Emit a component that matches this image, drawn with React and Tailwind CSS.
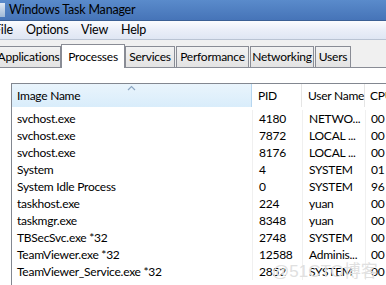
import React from "react";

const rows = [
  ["svchost.exe", "4180", "NETWO...", "00"],
  ["svchost.exe", "7872", "LOCAL ...", "00"],
  ["svchost.exe", "8176", "LOCAL ...", "00"],
  ["System", "4", "SYSTEM", "01"],
  ["System Idle Process", "0", "SYSTEM", "96"],
  ["taskhost.exe", "224", "yuan", "00"],
  ["taskmgr.exe", "8348", "yuan", "00"],
  ["TBSecSvc.exe *32", "2748", "SYSTEM", "00"],
  ["TeamViewer.exe *32", "12588", "Adminis...", "00"],
  ["TeamViewer_Service.exe *32", "2852", "SYSTEM", "00"],
];

const font = { fontFamily: 'Lato, "Noto Sans", sans-serif' };

export default function App() {
  return (
    <div className="relative w-[386px] h-[285px] overflow-hidden bg-white" style={font}>
      {/* Title bar */}
      <div className="flex h-[21px] items-center bg-gradient-to-b from-[#5a8bcb] to-[#4674b8] border-b border-[#3b5f94]">
        <div className="w-[5px] h-[14px] bg-gradient-to-b from-[#dfe9f5] to-[#9fb8d6] mr-[4px]" />
        <span className="text-[12.5px] tracking-[-0.2px] leading-none text-black whitespace-nowrap">Windows Task Manager</span>
      </div>
      {/* Menu bar */}
      <div className="flex h-[19px] items-center bg-gradient-to-b from-[#fbfcfe] via-[#eaeef8] to-[#dfe6f3] text-[12.5px] tracking-[-0.2px] text-black border-b border-[#b9c3d3] whitespace-nowrap">
        <span className="ml-[-6px] w-[32px]">File</span>
        <span className="w-[55px]">Options</span>
        <span className="w-[40px]">View</span>
        <span>Help</span>
      </div>
      {/* Tabs */}
      <div className="bg-[#f0f0f0] pt-[5px] h-[28px] flex items-end border-b border-[#898c95]">
        <div className="flex items-end h-full ml-[-4px] text-[12px] tracking-[-0.25px]">
          <Tab label="Applications" w={65} />
          <div className="h-[24px] w-[64px] -mb-px bg-white border border-b-0 border-[#898c95] flex items-start justify-center pt-[3px] z-10 relative whitespace-nowrap">Processes</div>
          <Tab label="Services" w={50} />
          <div className="w-[1px]" />
          <Tab label="Performance" w={73} />
          <div className="w-[1px]" />
          <Tab label="Networking" w={64} />
          <div className="w-[1px]" />
          <Tab label="Users" w={36} />
        </div>
      </div>
      {/* Content */}
      <div className="bg-white pt-[15px] pl-[11px]">
        <div className="border-l border-t border-[#828790] w-[400px] h-[220px]">
          {/* header */}
          <div className="flex h-[23px] text-[12px] tracking-[-0.25px] text-black whitespace-nowrap">
            <div className="relative w-[240px] bg-gradient-to-b from-[#e9f4fc] to-[#d9edfb] border-r border-[#b6d6f0] flex items-center pl-[5px]">
              Image Name
              <svg className="absolute left-[115px] top-[1px]" width="9" height="6" viewBox="0 0 9 6">
                <path d="M1 5 L4.5 1.5 L8 5" fill="none" stroke="#8ca6c2" strokeWidth="1.2" />
              </svg>
            </div>
            <div className="w-[50px] border-r border-[#e5e5e5] flex items-center pl-[6px]">PID</div>
            <div className="w-[63px] border-r border-[#e5e5e5] flex items-center pl-[6px]">User Name</div>
            <div className="flex items-center pl-[5px]">CPU</div>
          </div>
          <div className="pt-[3px]">
            {rows.map((r, i) => (
              <div key={i} className="flex h-[17px] text-[12px] tracking-[-0.25px] text-black leading-[17px] whitespace-nowrap">
                <div className="w-[240px] pl-[5px]">{r[0]}</div>
                <div className="w-[50px] border-l border-[#f0f0f0] pl-[6px]">{r[1]}</div>
                <div className="w-[63px] border-l border-[#f0f0f0] pl-[6px] overflow-hidden">{r[2]}</div>
                <div className="border-l border-[#f0f0f0] pl-[5px]">{r[3]}</div>
              </div>
            ))}
          </div>
        </div>
      </div>
      <div className="absolute left-[272px] top-[259px] text-[17px] text-[#e0e0e0] whitespace-nowrap pointer-events-none" style={{ fontFamily: '"Liberation Sans", "Noto Sans CJK SC", sans-serif' }}>
        @51CTO博客
      </div>
    </div>
  );
}

function Tab({ label, w }) {
  return (
    <div
      className="h-[21px] bg-gradient-to-b from-[#f2f2f2] to-[#e3e3e3] border border-b-0 border-[#898c95] flex items-center justify-center text-black whitespace-nowrap"
      style={{ width: w }}
    >
      {label}
    </div>
  );
}
